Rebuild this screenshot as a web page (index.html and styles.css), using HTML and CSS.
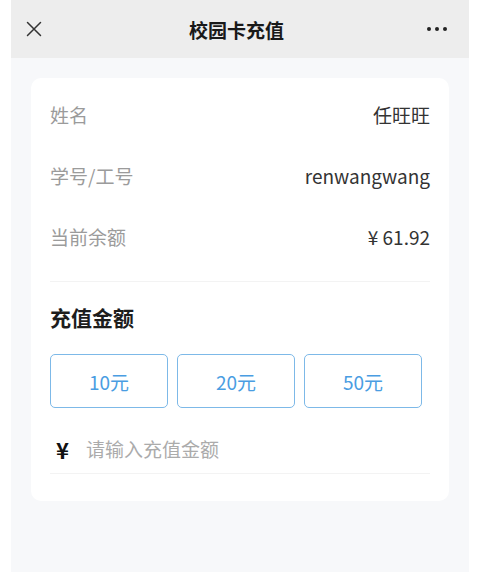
FILE: index.html
```html
<!DOCTYPE html>
<html lang="zh-CN">

<head>
    <meta charset="UTF-8">
    <meta name="viewport" content="width=device-width, initial-scale=1.0">
    <title>校园卡充值</title>
    <link rel="stylesheet" href="styles.css">
</head>

<body>
    <div class="app">
        <!-- Top bar -->
        <div class="topbar">
            <span class="topbar-close">
                <svg width="16" height="16" viewBox="0 0 16 16">
                    <path d="M1.5 1.5 L14.5 14.5 M14.5 1.5 L1.5 14.5" stroke="#333" stroke-width="1.5" fill="none" stroke-linecap="round"/>
                </svg>
            </span>
            <span class="topbar-title">校园卡充值</span>
            <span class="topbar-more">
                <i></i><i></i><i></i>
            </span>
        </div>

        <!-- Card -->
        <div class="card">
            <div class="info">
                <div class="info-row">
                    <span class="info-label">姓名</span>
                    <span class="info-value">任旺旺</span>
                </div>
                <div class="info-row">
                    <span class="info-label">学号/工号</span>
                    <span class="info-value">renwangwang</span>
                </div>
                <div class="info-row">
                    <span class="info-label">当前余额</span>
                    <span class="info-value">¥ 61.92</span>
                </div>
            </div>

            <h3 class="section-title">充值金额</h3>

            <div class="amounts">
                <button class="amount-btn">10元</button>
                <button class="amount-btn">20元</button>
                <button class="amount-btn">50元</button>
            </div>

            <div class="amount-input">
                <span class="amount-yen">¥</span>
                <input type="text" placeholder="请输入充值金额">
            </div>
        </div>
    </div>
</body>

</html>
```

FILE: styles.css
```css
* {
    margin: 0;
    padding: 0;
    box-sizing: border-box;
    font-family: 'Noto Sans CJK SC', 'Noto Sans', sans-serif;
}

body {
    background-color: #fff;
}

/* Page frame */
.app {
    width: 458px;
    margin-left: 11px;
    min-height: 572px;
    background-color: #f7f8fa;
}

/* Top bar */
.topbar {
    height: 58px;
    background-color: #ededed;
    display: flex;
    align-items: center;
    justify-content: space-between;
    padding: 0 21px 0 15px;
}

.topbar-close {
    width: 16px;
    height: 16px;
    display: flex;
}

.topbar-title {
    font-size: 19px;
    font-weight: 700;
    color: #191919;
    padding-left: 4px;
}

.topbar-more {
    display: flex;
    gap: 4px;
    width: 21px;
}

.topbar-more i {
    width: 4px;
    height: 4px;
    border-radius: 50%;
    background: #222;
}

/* Card */
.card {
    margin: 20px 20px 0;
    background: #fff;
    border-radius: 10px;
    padding: 6px 19px 27px;
}

.info {
    border-bottom: 1px solid #f3f3f3;
    padding-bottom: 14px;
}

.info-row {
    height: 61px;
    display: flex;
    align-items: center;
    justify-content: space-between;
    font-size: 19px;
}

.info-label {
    color: #9b9b9b;
}

.info-value {
    color: #333;
}

.section-title {
    margin-top: 21px;
    font-size: 21px;
    line-height: 28px;
    font-weight: 700;
    color: #1d1d1d;
}

/* Amount buttons */
.amounts {
    display: flex;
    gap: 9px;
    margin-top: 23px;
}

.amount-btn {
    width: 118px;
    height: 54px;
    border: 1px solid #7db9e8;
    border-radius: 5px;
    background: #fff;
    color: #4a9de2;
    font-size: 19px;
}

/* Custom amount input */
.amount-input {
    margin-top: 16px;
    height: 50px;
    display: flex;
    align-items: center;
    border-bottom: 1px solid #f3f3f3;
}

.amount-yen {
    margin-left: 6px;
    width: 30px;
    font-size: 22px;
    font-weight: 700;
    color: #111;
}

.amount-input input {
    flex: 1;
    border: none;
    outline: none;
    font-size: 19px;
    color: #333;
    background: transparent;
}

.amount-input input::placeholder {
    color: #ababab;
}
```
